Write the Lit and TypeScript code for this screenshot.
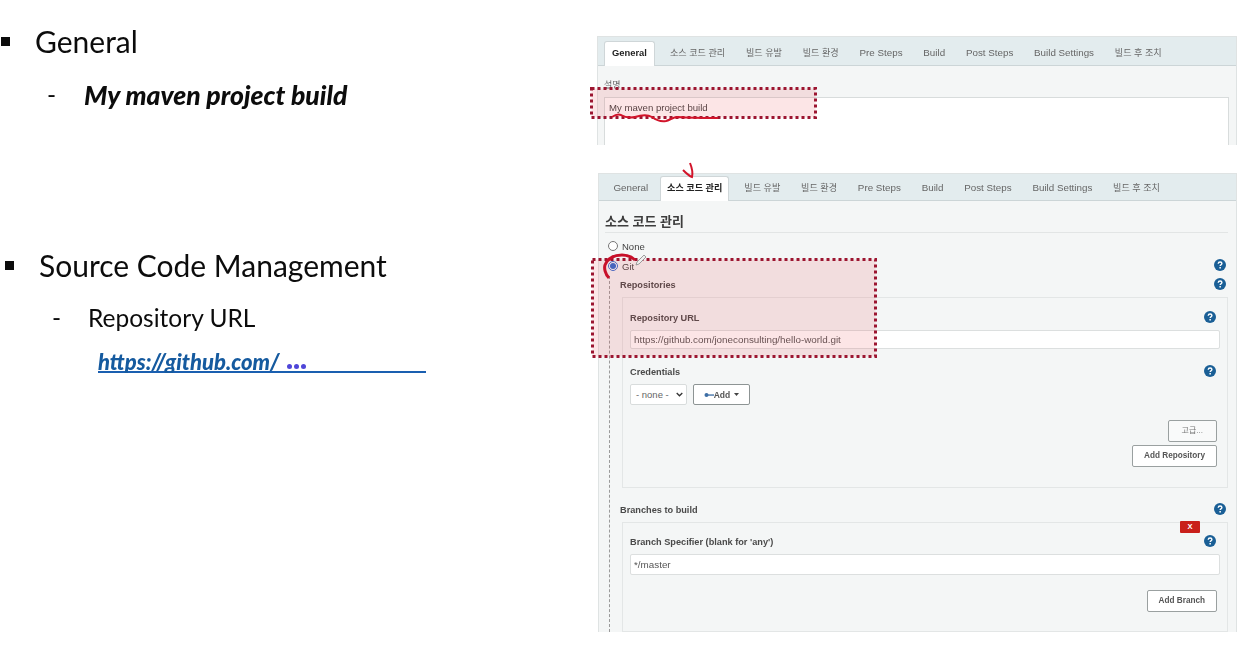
import { LitElement, html, css, svg } from "lit";
import { customElement } from "lit/decorators.js";

const TABS = ["General", "소스 코드 관리", "빌드 유발", "빌드 환경", "Pre Steps", "Build", "Post Steps", "Build Settings", "빌드 후 조치"];

const help = (cls = "") => html`<svg class="help ${cls}" viewBox="0 0 12 12" aria-hidden="true">
  <circle cx="6" cy="6" r="6" fill="#1a5f96"></circle>
  <path d="M4.2 4.7C4.3 3.6 5 3 6.1 3 7.2 3 7.9 3.6 7.9 4.5 7.9 5.2 7.5 5.5 6.9 5.9 6.4 6.2 6.2 6.5 6.2 7.1" fill="none" stroke="#fff" stroke-width="1.4"></path>
  <rect x="5.4" y="8" width="1.5" height="1.5" fill="#fff"></rect>
</svg>`;

@customElement("app-root")
export class AppRoot extends LitElement {
  static styles = css`
    :host { display: block; width: 1242px; height: 648px; position: relative; overflow: hidden; background: #fff; font-family: "Liberation Sans", "Noto Sans CJK KR", sans-serif; }
    .page { display: flex; width: 1242px; height: 648px; }

    .slide { width: 597px; flex: none; font-family: Lato, "Open Sans", sans-serif; color: #0c0c0c; filter: blur(0.35px); }
    .general { padding-top: 22px; }
    .scm { padding-top: 135px; }
    .head { display: flex; align-items: center; font-size: 30px; line-height: 38px; }
    .general .head { padding-left: 1px; }
    .scm .head { padding-left: 5px; }
    .square { width: 9px; height: 9px; background: #0c0c0c; flex: none; margin-right: 25px; }
    .sub { display: flex; align-items: center; font-size: 24.5px; line-height: 32px; }
    .dash { flex: none; width: 37px; }
    .general .sub { padding-left: 47px; margin-top: 19px; }
    .general .sub b { font-style: italic; font-weight: 900; font-size: 26.5px; }
    .scm .sub { padding-left: 52px; margin-top: 18px; }
    .scm .dash { width: 36px; }
    .link { position: relative; margin: 14px 0 0 98px; width: 328px; height: 23px; border-bottom: 2px solid #1a5fb0; display: flex; align-items: flex-start; gap: 7px; color: #155a9f; font-size: 22px; line-height: 27px; font-weight: 900; font-style: italic; }
    .link::after { content: ""; position: absolute; left: 0; right: 0; top: 25px; height: 8px; background: #fff; }
    .dots { display: flex; gap: 2px; padding-top: 16px; }
    .dots i { width: 5px; height: 5px; border-radius: 50%; background: #4f46d8; }

    .shots { flex: none; width: 640px; padding-top: 36px; font-size: 9.8px; color: #444; filter: blur(0.45px); }
    .panel { background: #f4f6f6; border: 1px solid #dfe3e3; border-bottom: 0; overflow: hidden; }
    .p1 { height: 109px; margin-bottom: 28px; box-sizing: border-box; }
    .p2 { height: 459px; box-sizing: border-box; margin-left: 1px; }
    .tabs { display: flex; align-items: flex-end; height: 28px; background: #e3ecee; border-bottom: 1px solid #ccd5d7; color: #666; }
    .p1 .tabs { padding-left: 6px; }
    .p2 .tabs { height: 26px; padding-left: 4px; }
    .tab { padding: 0 10.4px; height: 24px; line-height: 22px; white-space: nowrap; margin-bottom: -1px; }
    .tab.ko { font-size: 9.1px; }
    .tab.on { padding: 0 7px; background: #fff; border: 1px solid #cfd6d8; border-bottom: 0; border-radius: 3px 3px 0 0; color: #222; font-weight: 700; margin-right: 4.6px; }
    .p1 .tab.on { font-size: 9.4px; }
    .p2 .tab.on { margin-left: 1.4px; padding: 0 6px; }

    .p1 .body { padding: 13px 7px 0 6px; }
    .ko-label { font-size: 9px; line-height: 12px; color: #666; margin-bottom: 6px; }
    .area { height: 60px; background: #fff; border: 1px solid #d8dcdc; padding: 5px 4px; font-size: 9.6px; line-height: 10px; color: #444; }

    .p2 .body { padding: 11px 8px 0 6px; position: relative; }
    h2 { margin: 0; font-size: 13px; line-height: 20px; font-weight: 700; color: #3d3d3d; border-bottom: 1px solid #e2e5e5; }
    .radio { display: flex; align-items: center; gap: 4px; height: 20px; padding-left: 3px; font-size: 9.5px; color: #444; }
    .radio input { width: 10px; height: 10px; margin: 0; accent-color: #2f6bd0; }
    .none { margin-top: 3px; }
    .line { display: flex; align-items: center; justify-content: space-between; }
    .git { padding-right: 2px; }
    .tree { margin-left: 4px; border-left: 1px dashed #9a9a9a; padding-left: 10px; }
    .lab { font-size: 9.2px; font-weight: 700; color: #4a4a4a; line-height: 13px; padding-right: 2px; height: 18px; }
    .box { border: 1px solid #e3e6e6; padding: 9px 7px 0 7px; box-sizing: border-box; margin-left: 2px; }
    .box .lab { padding-right: 4px; height: 22px; margin-bottom: 1px; }
    .repos { height: 191px; margin-top: 3px; margin-bottom: 13px; }
    .branch { height: 110px; margin-top: 3px; padding-top: 8px; position: relative; }
    .input { height: 17px; line-height: 17px; background: #fff; border: 1px solid #dcdfdf; border-radius: 2px; padding: 0 3px; font-size: 9.85px; color: #555; }
    .input.tall { height: 19px; line-height: 19px; }
    .box .cred { margin-top: 12px; }
    .ctl { display: flex; gap: 6px; margin-top: 1px; }
    .select { width: 47px; height: 19px; background: #fff; border: 1px solid #d8dcdc; border-radius: 2px; display: flex; align-items: center; justify-content: space-between; padding: 0 3px 0 5px; font-size: 9.5px; color: #666; }
    .select svg { width: 7px; height: 5px; }
    .add { width: 55px; height: 19px; background: #fff; border: 1px solid #8d9494; border-radius: 2px; display: flex; align-items: center; justify-content: center; font-size: 8.5px; font-weight: 700; color: #555; }
    .add svg.key { width: 10px; height: 6px; }
    .add svg.caret { width: 5px; height: 3px; margin-left: 4px; }
    .btns { display: flex; flex-direction: column; align-items: flex-end; gap: 3px; padding-right: 3px; margin-top: 15px; }
    .btn { height: 20px; padding: 0 11px; line-height: 20px; background: #fff; border: 1px solid #9aa0a0; border-radius: 2px; font-size: 8.2px; font-weight: 700; color: #555; white-space: nowrap; }
    .btn.ko { padding: 0 13px; font-weight: 400; font-size: 8px; background: #f9fafa; color: #777; }
    .bb { margin-top: 15px; display: flex; justify-content: flex-end; padding-right: 3px; }
    .help { width: 12px; height: 12px; flex: none; margin-top: -2px; }
    .box .help { margin-top: -3px; }
    .x { position: absolute; top: -2px; right: 27px; width: 20px; height: 12px; background: #c9201b; color: #fff; font-size: 7.5px; font-weight: 700; line-height: 12px; text-align: center; border-radius: 1px; }

    .ink { position: absolute; left: 0; top: 0; width: 1242px; height: 648px; pointer-events: none; }
  `;

  private tabs(active: number) {
    return html`<div class="tabs">${TABS.map((t, i) => html`<div class="tab ${i === active ? "on" : ""} ${/[가-힣]/.test(t) ? "ko" : ""}">${t}</div>`)}</div>`;
  }

  render() {
    return html`
      <div class="page">
        <div class="slide">
          <section class="general">
            <div class="head"><span class="square"></span>General</div>
            <div class="sub"><span class="dash">-</span><b>My maven project build</b></div>
          </section>
          <section class="scm">
            <div class="head"><span class="square"></span>Source Code Management</div>
            <div class="sub"><span class="dash">-</span>Repository URL</div>
            <div class="link">https://github.com/<span class="dots"><i></i><i></i><i></i></span></div>
          </section>
        </div>
        <div class="shots">
          <div class="panel p1">
            ${this.tabs(0)}
            <div class="body">
              <div class="ko-label">설명</div>
              <div class="area">My maven project build</div>
            </div>
          </div>
          <div class="panel p2">
            ${this.tabs(1)}
            <div class="body">
              <h2>소스 코드 관리</h2>
              <label class="radio none"><input type="radio" name="scm" />None</label>
              <div class="line git"><label class="radio"><input type="radio" name="scm" checked />Git</label>${help()}</div>
              <div class="tree">
                <div class="line lab"><span>Repositories</span>${help()}</div>
                <div class="box repos">
                  <div class="line lab"><span>Repository URL</span>${help()}</div>
                  <div class="input">https://github.com/joneconsulting/hello-world.git</div>
                  <div class="line lab cred"><span>Credentials</span>${help()}</div>
                  <div class="ctl">
                    <div class="select">- none -<svg viewBox="0 0 7 5"><path d="M.7 1 3.5 3.8 6.3 1" fill="none" stroke="#333" stroke-width="1.3"></path></svg></div>
                    <div class="add">
                      <svg class="key" viewBox="0 0 10 6"><circle cx="2.5" cy="3" r="2" fill="#3d6ea5"></circle><rect x="4" y="2.4" width="6" height="1.3" fill="#3d6ea5"></rect></svg>Add<svg class="caret" viewBox="0 0 5 3"><path d="M0 0H5L2.5 3Z" fill="#444"></path></svg>
                    </div>
                  </div>
                  <div class="btns">
                    <div class="btn ko">고급...</div>
                    <div class="btn">Add Repository</div>
                  </div>
                </div>
                <div class="line lab"><span>Branches to build</span>${help()}</div>
                <div class="box branch">
                  <div class="x">X</div>
                  <div class="line lab"><span>Branch Specifier (blank for 'any')</span>${help()}</div>
                  <div class="input tall">*/master</div>
                  <div class="bb"><div class="btn">Add Branch</div></div>
                </div>
              </div>
            </div>
          </div>
        </div>
      </div>
      <svg class="ink" viewBox="0 0 1242 648" aria-hidden="true">
        ${svg`<rect x="591.5" y="88.5" width="224" height="29" fill="rgba(235,70,80,.14)" stroke="#9c1530" stroke-width="3" stroke-dasharray="3 3"></rect>
        <rect x="592.5" y="259.5" width="283" height="97" fill="rgba(235,70,80,.14)" stroke="#9c1530" stroke-width="3" stroke-dasharray="3 3"></rect>
        <path d="M612 117C615 115 618 114 621 115 626 118 630 118 635 117 641 115 647 114 652 117 656 120 661 122 666 121 670 120 673 117 678 117 690 118 705 118 718 118" fill="none" stroke="#d2142a" stroke-width="2"></path>
        <path d="M683 170C686 173 689 176 692 177 693 173 692 168 690 163" fill="none" stroke="#d2142a" stroke-width="2"></path>
        <path d="M609 278C605 274 604 268 605 265 608 258 615 255 622 255 628 255 632 257 635 260" fill="none" stroke="#c8102a" stroke-width="3"></path>
        <path d="M637 262 644 255 646 257 639 264 636 265Z" fill="#eee" stroke="#888" stroke-width="0.8"></path>`}
      </svg>
    `;
  }
}
